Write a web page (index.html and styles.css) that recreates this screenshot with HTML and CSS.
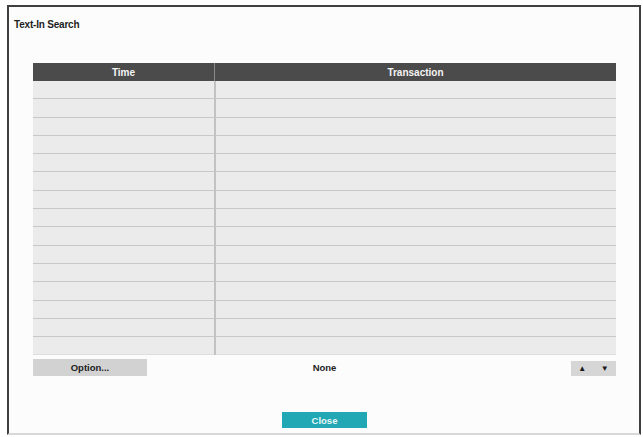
FILE: index.html
```html
<!DOCTYPE html>
<html lang="en">
<head>
  <meta charset="UTF-8" />
  <meta name="viewport" content="width=device-width, initial-scale=1.0" />
  <title>Text-In Search</title>
  <link rel="stylesheet" href="styles.css">
</head>
<body>
  <div class="dialog">
    <h1 class="title">Text-In Search</h1>

    <div class="content">
      <table class="results">
        <thead>
          <tr>
            <th class="col-time">Time</th>
            <th>Transaction</th>
          </tr>
        </thead>
        <tbody id="resultRows"></tbody>
      </table>

      <div class="toolbar">
        <button class="option-btn">Option...</button>
        <span class="status">None</span>
        <div class="pager">
          <button class="page-btn">&#9650;</button>
          <button class="page-btn">&#9660;</button>
        </div>
      </div>

      <div class="actions">
        <button class="close-btn">Close</button>
      </div>
    </div>
  </div>

  <script>
    // empty result list, 15 blank rows
    const rows = document.getElementById("resultRows");
    for (let i = 0; i < 15; i++) {
      const row = document.createElement("tr");
      row.innerHTML = `<td class="col-time"></td><td></td>`;
      rows.appendChild(row);
    }
  </script>
</body>
</html>
```

FILE: styles.css
```css
body {
  margin: 0;
  background-color: #ffffff;
  font-family: "Liberation Sans", Arial, sans-serif;
}

/* Janela do diálogo */
.dialog {
  box-sizing: border-box;
  width: 634px;
  height: 430px;
  margin: 5px 0 0 7px;
  border: 2px solid #3f3f3f;
  border-bottom-color: #d8d8d8;
  background-color: #fcfcfc;
  display: flex;
  flex-direction: column;
}

.title {
  margin: 0;
  padding: 11px 0 0 5px;
  font-size: 10px;
  line-height: 13px;
  font-weight: bold;
  color: #1e1e1e;
  letter-spacing: -0.2px;
}

.content {
  padding: 32px 23px 0 24px;
  display: flex;
  flex-direction: column;
}

/* Tabela de resultados */
.results {
  width: 583px;
  table-layout: fixed;
  border-collapse: collapse;
}
.results th {
  height: 18px;
  padding: 0;
  background-color: #4b4b4b;
  color: #f4f4f4;
  font-size: 10px;
  font-weight: bold;
  text-align: center;
}
.results th.col-time {
  width: 181px;
  border-right: 1px solid #8a8a8a;
}
.results td {
  height: 17.3px;
  padding: 0;
  background-color: #ebebeb;
  border-bottom: 1px solid #c8c8c8;
}
.results td.col-time {
  border-right: 2px solid #c2c2c2;
}
.results tbody tr:last-child td {
  border-bottom-color: #dedede;
}

/* Barra abaixo da tabela */
.toolbar {
  margin-top: 4px;
  display: grid;
  grid-template-columns: 1fr auto 1fr;
  align-items: end;
}
.option-btn {
  width: 114px;
  height: 17px;
  padding: 0;
  border: none;
  background-color: #d2d2d2;
  color: #222222;
  font-family: inherit;
  font-size: 9.5px;
  font-weight: bold;
}
.status {
  align-self: center;
  font-size: 9.5px;
  font-weight: bold;
  color: #1e1e1e;
}
.pager {
  justify-self: end;
  width: 45px;
  height: 15px;
  display: flex;
  justify-content: space-around;
  align-items: center;
  background-color: #d6d6d6;
}
.page-btn {
  padding: 0;
  border: none;
  background: none;
  color: #1a1a1a;
  font-size: 8px;
  line-height: 8px;
}

/* Botão fechar */
.actions {
  margin-top: 36px;
  display: flex;
  justify-content: center;
}
.close-btn {
  width: 85px;
  height: 16px;
  padding: 0;
  border: none;
  background-color: #22a7b4;
  color: #e8f7f8;
  font-family: inherit;
  font-size: 9.5px;
  font-weight: bold;
}
```
